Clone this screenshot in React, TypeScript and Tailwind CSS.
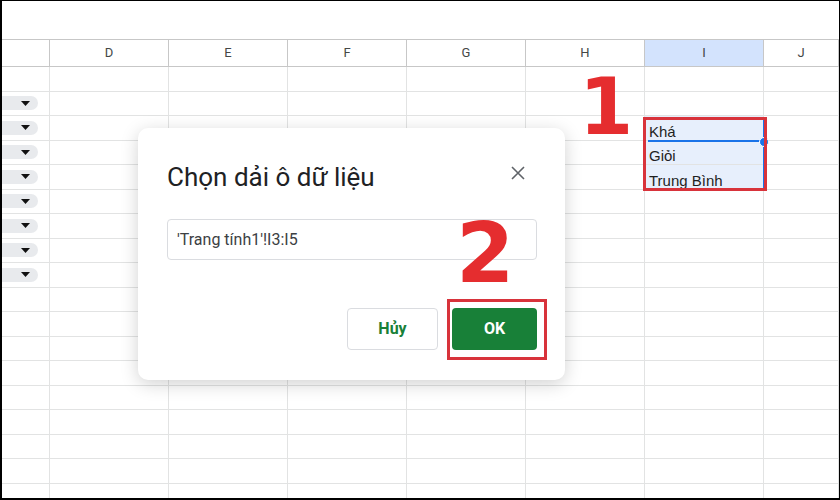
import React from "react";

const columns = [
  { label: "", width: "w-[48px]" },
  { label: "D", width: "w-[119px]" },
  { label: "E", width: "w-[119px]" },
  { label: "F", width: "w-[119px]" },
  { label: "G", width: "w-[119px]" },
  { label: "H", width: "w-[119px]" },
  { label: "I", width: "w-[119px]" },
  { label: "J", width: "flex-1" },
];

const values: Record<number, string> = { 2: "Khá", 3: "Giỏi", 4: "Trung Bình" };

function Chip() {
  return (
    <div className="flex h-[14px] w-[36px] items-center justify-end rounded-r-full bg-[#e8eaed] pr-[8px]">
      <svg width="9" height="5" viewBox="0 0 9 5">
        <path d="M0 0h9L4.5 5z" fill="#111" />
      </svg>
    </div>
  );
}

function Cell({ col, row }: { col: number; row: number }) {
  const inRange = col === 6 && row >= 2 && row <= 4;
  return (
    <div
      className={`${columns[col].width} flex h-full shrink-0 border-r border-[#e2e3e3] ${
        inRange ? "items-end bg-[#e7effc] pl-[4px]" : "items-center"
      }`}
    >
      {col === 0 && row >= 1 && row <= 8 && <Chip />}
      {inRange && (
        <span className="text-[15px] leading-[17px] text-[#1f1f1f]">{values[row]}</span>
      )}
    </div>
  );
}

export default function App() {
  const rows = Array.from({ length: 18 }, (_, i) => i);
  return (
    <div className="relative h-[500px] w-[840px] overflow-hidden border-b-2 border-l-2 border-r border-t border-black bg-white font-['Liberation_Sans',Arial,sans-serif]">
      <div className="h-[38px]" />

      {/* column headers */}
      <div className="flex h-[28px] border-y border-[#c7c7c7]">
        {columns.map((c) => (
          <div
            key={c.label || "c"}
            className={`${c.width} flex shrink-0 items-center justify-center border-r border-[#c7c7c7] font-['Roboto',sans-serif] text-[13px] text-[#444746] ${
              c.label === "I" ? "bg-[#d3e3fd] text-[#1f1f1f]" : ""
            }`}
          >
            {c.label}
          </div>
        ))}
      </div>

      {/* grid body */}
      {rows.map((r) => (
        <div key={r} className="flex h-[24.5px] border-b border-[#e2e3e3]">
          {columns.map((_, c) => (
            <Cell key={c} col={c} row={r} />
          ))}
        </div>
      ))}

      {/* selection overlay */}
      <div className="absolute left-[646px] top-[139px] h-[2px] w-[117px] bg-[#1a73e8]" />
      <div className="absolute left-[761px] top-[116px] h-[74px] w-[2px] bg-[#1a73e8]" />
      <div className="absolute left-[757px] top-[136px] h-[10px] w-[10px] rounded-full border border-white bg-[#1a73e8]" />
      <div className="absolute left-[641px] top-[116px] h-[74px] w-[124px] border-[3px] border-[#d8333b]" />

      {/* step markers */}
      <div className="absolute left-[577px] top-[67px] font-['DejaVu_Sans',sans-serif] text-[78px] font-bold leading-none text-[#e52d2f]">
        1
      </div>

      {/* dialog */}
      <div className="absolute left-[136px] top-[127px] w-[427px] rounded-[10px] bg-white pb-[30px] pl-[29px] pr-[28px] pt-[33px] font-['Roboto',sans-serif] shadow-[0_4px_18px_rgba(0,0,0,0.18)]">
        <div className="flex h-[32px] items-center justify-between">
          <h2 className="text-[26px] font-normal leading-[32px] text-[#202124]">Chọn dải ô dữ liệu</h2>
          <button className="mb-2 mr-[5px] flex h-[28px] w-[28px] items-center justify-center">
            <svg width="14" height="14" viewBox="0 0 14 14">
              <path d="M1 1l12 12M13 1L1 13" stroke="#5f6368" strokeWidth="1.6" />
            </svg>
          </button>
        </div>
        <div className="mt-[26px] flex h-[41px] items-center rounded-[4px] border border-[#dadce0] pl-[9px] text-[16px] text-[#3c4043]">
          'Trang tính1'!I3:I5
        </div>
        <div className="mt-[48px] flex justify-end gap-[14px]">
          <button className="h-[42px] w-[91px] rounded-[4px] border border-[#dadce0] bg-white text-[16px] font-bold text-[#188038]">
            Hủy
          </button>
          <button className="h-[42px] w-[85px] rounded-[4px] bg-[#188038] text-[16px] font-bold text-white">
            OK
          </button>
        </div>
      </div>

      <div className="absolute left-[445px] top-[298px] h-[61px] w-[100px] border-[3px] border-[#d8333b]" />
      <div className="absolute left-[454px] top-[210px] font-['DejaVu_Sans',sans-serif] text-[84px] font-bold leading-none text-[#e52d2f]">
        2
      </div>
    </div>
  );
}
